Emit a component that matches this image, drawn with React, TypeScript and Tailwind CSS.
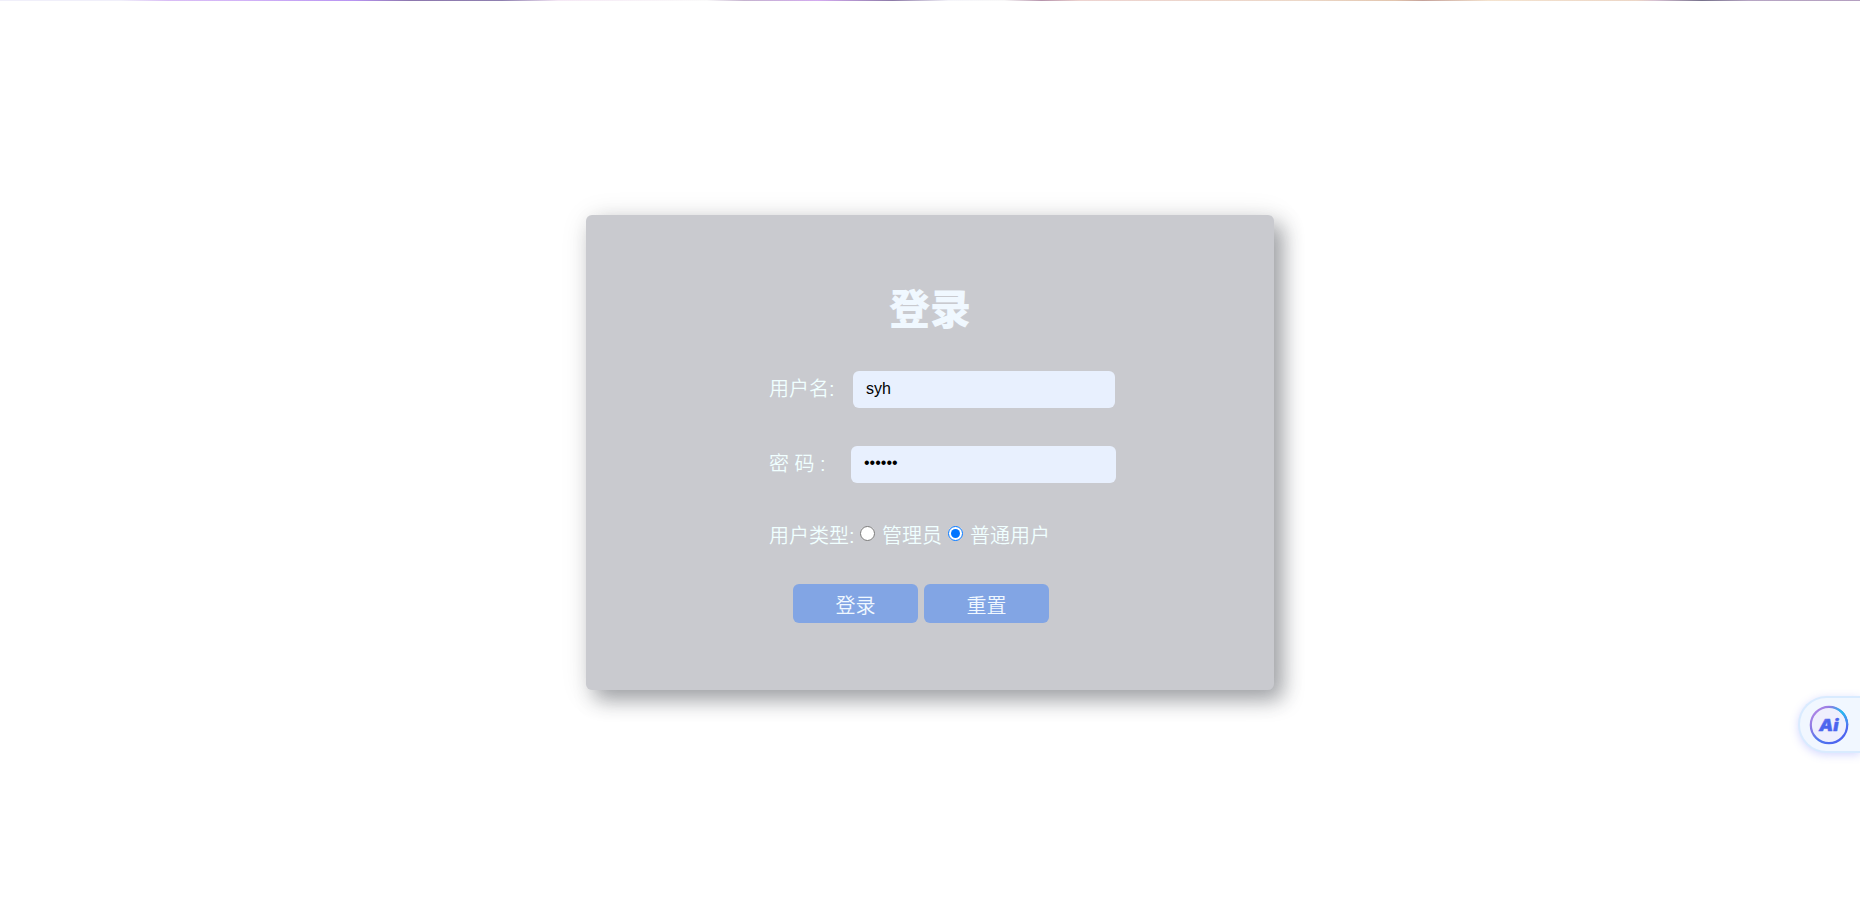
import { useState } from "react";

const labelClass = "text-[20px] leading-[26px] font-[350] text-[#f0ffff] whitespace-pre";
const inputClass =
  "h-[37px] rounded-md bg-[#e8f0fe] pl-[13px] pr-3 text-[16px] text-black outline-none";
const buttonClass =
  "h-[39px] w-[125px] rounded-md bg-[#82a5e4] pt-1 text-[20px] leading-[26px] font-[350] text-[#f0f8ff]";

function AiButton() {
  return (
    <button
      type="button"
      className="absolute top-[696px] right-0 flex h-[57px] w-[62px] items-center rounded-l-full border-2 border-r-0 border-[#d9ebff] bg-[#f1f7ff] pl-2 shadow-[0_2px_8px_rgba(120,130,255,0.3)]"
    >
      <svg width="42" height="42" viewBox="0 0 42 42" fill="none">
        <defs>
          <linearGradient id="ring" x1="6" y1="4" x2="36" y2="36" gradientUnits="userSpaceOnUse">
            <stop offset="0" stopColor="#b98be6" />
            <stop offset="0.28" stopColor="#8d78e4" />
            <stop offset="0.6" stopColor="#4f79ee" />
            <stop offset="1" stopColor="#4c5ff0" />
          </linearGradient>
          <linearGradient id="cyan" x1="21" y1="2" x2="39" y2="21" gradientUnits="userSpaceOnUse">
            <stop offset="0" stopColor="#35b4e8" stopOpacity="0" />
            <stop offset="0.5" stopColor="#24bff0" />
            <stop offset="1" stopColor="#4d7cf0" />
          </linearGradient>
          <linearGradient id="mark" x1="12" y1="13" x2="20" y2="22" gradientUnits="userSpaceOnUse">
            <stop offset="0" stopColor="#b59cf2" />
            <stop offset="0.6" stopColor="#5068ee" />
            <stop offset="1" stopColor="#4c64ee" />
          </linearGradient>
        </defs>
        <circle cx="21" cy="21" r="18.2" fill="#efeffd" stroke="url(#ring)" strokeWidth="2.2" />
        <path d="M21 2.8A18.2 18.2 0 0 1 39.2 21" stroke="url(#cyan)" strokeWidth="2.2" />
        <text
          x="11"
          y="27.3"
          textLength="19.5"
          lengthAdjust="spacingAndGlyphs"
          fill="url(#mark)"
          stroke="url(#mark)"
          strokeWidth="0.4"
          className="font-['Inter',sans-serif] text-[16.5px] font-black italic"
        >
          Ai
        </text>
      </svg>
    </button>
  );
}

export default function App() {
  const [username, setUsername] = useState("syh");
  const [password, setPassword] = useState("123456");
  const [role, setRole] = useState("user");

  const reset = () => {
    setUsername("");
    setPassword("");
    setRole("user");
  };

  return (
    <div className="relative flex h-[902px] w-full flex-col overflow-hidden bg-white font-['Liberation_Sans','Noto_Sans_CJK_SC',sans-serif]">
      <div className="h-px w-full shrink-0 bg-[linear-gradient(90deg,#f0effa_0%,#f0effa_6.5%,#d9bdf5_9%,#d2b3f7_13%,#b894f2_19%,#8d78ae_22%,#8f80b0_27%,#f5e8f5_30%,#fafafa_38%,#c5b3cf_40%,#d3aaf0_44%,#8d7ba8_48%,#f5f5fa_51%,#f8f8f8_54%,#b694ac_56%,#edd3d0_58%,#ecd8c8_70%,#e2c5ae_75%,#c5a29a_76.5%,#f4e3cf_80%,#ecd6c6_88%,#d6c0d2_89%,#77728c_91.5%,#b7a6c4_94%,#b49fc0_100%)]" />
      <div className="mx-auto mt-[214px] h-[475px] w-[688px] rounded-md bg-[#c9cacf] pt-[67px] shadow-[9px_10px_20px_rgba(40,44,54,0.38),3px_4px_30px_rgba(0,0,0,0.12)]">
        <h1 className="text-center text-[41px] leading-[56px] font-black text-[#f0f8ff]">登录</h1>
        <form className="ml-[183px]" onSubmit={(e) => e.preventDefault()}>
          <div className="mt-[33px] flex h-[37px]">
            <label htmlFor="username" className={`${labelClass} w-[84px] pt-[5px]`}>
              用户名:
            </label>
            <input
              id="username"
              type="text"
              className={`${inputClass} w-[262px] pb-px`}
              value={username}
              onChange={(e) => setUsername(e.target.value)}
            />
          </div>
          <div className="mt-[38px] flex h-[37px]">
            <label htmlFor="password" className={`${labelClass} w-[82px] pt-[5px]`}>
              密 码 :
            </label>
            <input
              id="password"
              type="password"
              className={`${inputClass} w-[265px] pb-[3px]`}
              value={password}
              onChange={(e) => setPassword(e.target.value)}
            />
          </div>
          <div className="mt-[38px] flex h-[26px]">
            <span className={`${labelClass} w-[91px] pt-0.5`}>用户类型:</span>
            <input
              type="radio"
              name="role"
              className="mt-[5px] size-[15px]"
              checked={role === "admin"}
              onChange={() => setRole("admin")}
            />
            <span className={`${labelClass} ml-[7px] w-[66px] pt-0.5`}>管理员</span>
            <input
              type="radio"
              name="role"
              className="mt-[5px] size-[15px]"
              checked={role === "user"}
              onChange={() => setRole("user")}
            />
            <span className={`${labelClass} ml-[7px] pt-0.5`}>普通用户</span>
          </div>
          <div className="mt-[37px] ml-6 flex gap-1.5">
            <button type="submit" className={buttonClass}>
              登录
            </button>
            <button type="button" className={buttonClass} onClick={reset}>
              重置
            </button>
          </div>
        </form>
      </div>
      <AiButton />
    </div>
  );
}
